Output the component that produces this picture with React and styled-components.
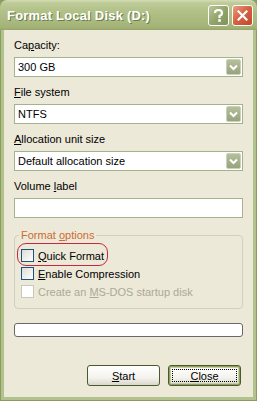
import React from 'react'
import styled, { createGlobalStyle } from 'styled-components'

const GlobalStyle = createGlobalStyle`
  html, body { margin: 0; padding: 0; background: #ECE9D8; }
  body { font-family: "Liberation Sans", Arial, sans-serif; font-size: 11px; }
`

const fields = [
  { label: <>Ca<u>p</u>acity:</>, value: '300 GB' },
  { label: <><u>F</u>ile system</>, value: 'NTFS' },
  { label: <><u>A</u>llocation unit size</>, value: 'Default allocation size' },
]

const options = [
  { label: <><u>Q</u>uick Format</>, marked: true },
  { label: <><u>E</u>nable Compression</> },
  { label: <>Create an <u>M</u>S-DOS startup disk</>, disabled: true },
]

export default function App() {
  return (
    <Window>
      <GlobalStyle />
      <TitleBar>
        <Title>Format Local Disk (D:)</Title>
        <CaptionButtons>
          <CaptionButton>
            <svg width="11" height="13" viewBox="0 0 11 13">
              <path d="M2 4 Q2 1 5.5 1 Q9 1 9 4 Q9 6 6.5 7 L6.5 9" fill="none" stroke="#fff" strokeWidth="2.2" />
              <rect x="5.2" y="10.2" width="2.6" height="2.6" fill="#fff" />
            </svg>
          </CaptionButton>
          <CaptionButton close>
            <svg width="11" height="11" viewBox="0 0 11 11">
              <path d="M1.5 1.5 L9.5 9.5 M9.5 1.5 L1.5 9.5" stroke="#fff" strokeWidth="2.2" strokeLinecap="square" />
            </svg>
          </CaptionButton>
        </CaptionButtons>
      </TitleBar>
      <Body>
        {fields.map((f, i) => (
          <Field key={i}>
            <Label>{f.label}</Label>
            <Select>
              <span>{f.value}</span>
              <DropButton>
                <svg width="9" height="7" viewBox="0 0 9 7">
                  <path d="M1 1.5 L4.5 5 L8 1.5" fill="none" stroke="#fff" strokeWidth="2" />
                </svg>
              </DropButton>
            </Select>
          </Field>
        ))}
        <Field>
          <Label>Volume <u>l</u>abel</Label>
          <TextBox />
        </Field>
        <Group>
          <Legend>Format <u>o</u>ptions</Legend>
          {options.map((o, i) => (
            <Option key={i} marked={o.marked} disabled={o.disabled}>
              <Check disabled={o.disabled} />
              <span>{o.label}</span>
            </Option>
          ))}
        </Group>
        <Progress />
        <Buttons>
          <Button><u>S</u>tart</Button>
          <Button primary><u>C</u>lose</Button>
        </Buttons>
      </Body>
    </Window>
  )
}

const Window = styled.div`
width:257px;
height:401px;
box-sizing:border-box;
display:flex;
flex-direction:column;
background:#8A9B63;
padding:0 1px 1px 1px;
color:#000;
`

const TitleBar = styled.div`
height:30px;
flex:none;
margin:0 -1px;
display:flex;
align-items:center;
justify-content:space-between;
padding:0 4px 0 7px;
border-radius:7px 7px 0 0;
background:linear-gradient(#D3DDB4 0px, #BECB98 3px, #B0C086 12px, #A9B97E 22px, #A2B277 28px, #94A46A 30px);
`

const Title = styled.div`
font-family:"Liberation Sans", Arial, sans-serif;
font-weight:700;
font-size:13px;
letter-spacing:0.2px;
color:#fff;
text-shadow:1px 1px 0 #6E7C4A;
margin-top:1px;
`

const CaptionButtons = styled.div`
display:flex;
gap:3px;
margin-top:1px;
`

const CaptionButton = styled.div`
width:21px;
height:21px;
box-sizing:border-box;
border:1px solid #fff;
border-radius:3px;
display:flex;
align-items:center;
justify-content:center;
background:${({ close }) => close
    ? 'linear-gradient(135deg, #E9A084 0%, #D76344 45%, #C4472A 100%)'
    : 'linear-gradient(135deg, #B9C799 0%, #93A56C 50%, #7F925A 100%)'};
`

const Body = styled.div`
flex:1;
display:flex;
flex-direction:column;
background:#ECE9D8;
border:3px solid #B2C28C;
border-top:none;
padding:9px 10px 0 10px;
`

const Field = styled.div`
display:flex;
flex-direction:column;
gap:5px;
margin-bottom:9px;
&:last-of-type{
  gap:3px;
}
`

const Label = styled.div`
line-height:13px;
`

const Select = styled.div`
height:20px;
box-sizing:border-box;
border:1px solid #A5B38C;
background:#fff;
display:flex;
align-items:center;
justify-content:space-between;
padding:0 1px 0 3px;
`

const DropButton = styled.div`
width:15px;
height:16px;
box-sizing:border-box;
border:1px solid #C9D1B7;
border-radius:2px;
background:linear-gradient(#B5BF9C, #97A27F);
display:flex;
align-items:center;
justify-content:center;
`

const TextBox = styled.div`
height:20px;
box-sizing:border-box;
border:1px solid #A5B38C;
background:#fff;
`

const Group = styled.div`
position:relative;
margin-top:8px;
border:1px solid #D0D0BF;
border-radius:4px;
padding:13px 0 10px 6px;
display:flex;
flex-direction:column;
gap:5px;
`

const Legend = styled.div`
position:absolute;
top:-7px;
left:4px;
padding:0 2px;
background:#ECE9D8;
color:#CD6B32;
line-height:13px;
`

const Option = styled.div`
display:flex;
align-items:center;
gap:4px;
height:13px;
color:${({ disabled }) => (disabled ? '#ACA899' : '#000')};
position:relative;
&::after{
  content:'';
  display:${({ marked }) => (marked ? 'block' : 'none')};
  position:absolute;
  left:-4px;
  top:-6px;
  width:89px;
  height:21px;
  border:1px solid #C8283E;
  border-radius:9px;
}
`

const Check = styled.div`
width:13px;
height:13px;
box-sizing:border-box;
border:1px solid ${({ disabled }) => (disabled ? '#CAC8BB' : '#1C5180')};
background:${({ disabled }) => (disabled ? '#fff' : 'linear-gradient(135deg, #DCDCD7, #FFFFFF)')};
`

const Progress = styled.div`
margin-top:14px;
height:14px;
box-sizing:border-box;
border:1px solid #686868;
border-radius:3px;
background:#fff;
`

const Buttons = styled.div`
display:flex;
justify-content:flex-end;
gap:8px;
margin-top:28px;
padding-right:2px;
`

const Button = styled.div`
width:73px;
height:21px;
box-sizing:border-box;
display:flex;
align-items:center;
justify-content:center;
border:1px solid #4B5A2E;
border-radius:3px;
background:linear-gradient(#FFFFFF, #F4F3EE 60%, #DAD8CC);
box-shadow:${({ primary }) => (primary ? 'inset 0 0 0 1px #8EA05F, inset 0 0 0 2px #C6CFA4' : 'none')};
position:relative;
&::after{
  content:'';
  display:${({ primary }) => (primary ? 'block' : 'none')};
  position:absolute;
  inset:3px;
  border:1px dotted #000;
}
`
